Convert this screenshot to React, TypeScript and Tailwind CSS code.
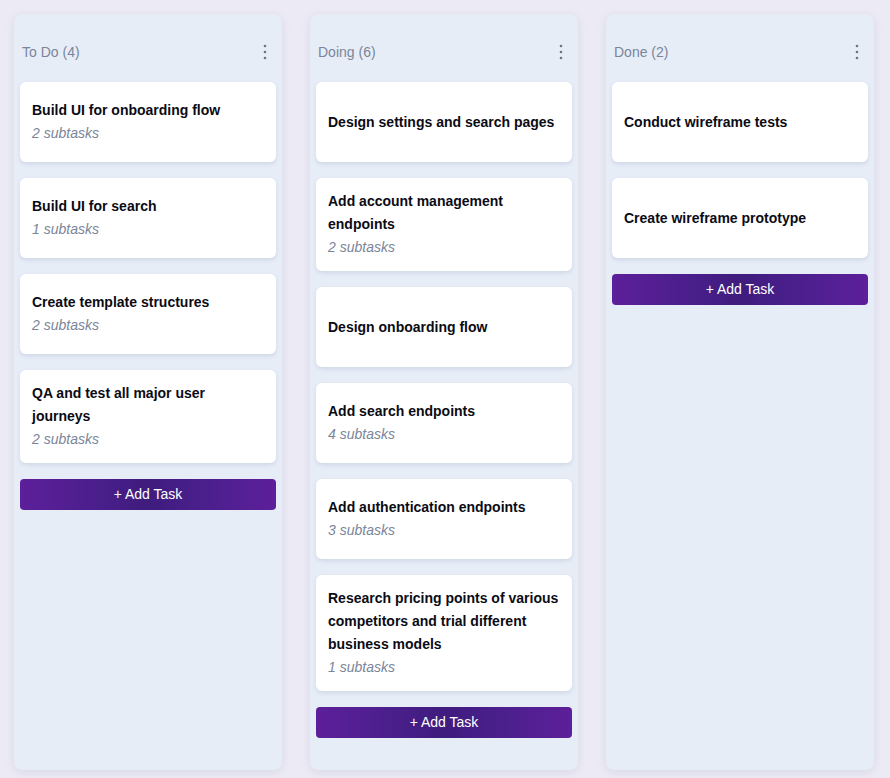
import React from "react";

type Task = { title: string; subtasks?: number };
type Col = { name: string; tasks: Task[] };

const cols: Col[] = [
  {
    name: "To Do",
    tasks: [
      { title: "Build UI for onboarding flow", subtasks: 2 },
      { title: "Build UI for search", subtasks: 1 },
      { title: "Create template structures", subtasks: 2 },
      { title: "QA and test all major user journeys", subtasks: 2 },
    ],
  },
  {
    name: "Doing",
    tasks: [
      { title: "Design settings and search pages" },
      { title: "Add account management endpoints", subtasks: 2 },
      { title: "Design onboarding flow" },
      { title: "Add search endpoints", subtasks: 4 },
      { title: "Add authentication endpoints", subtasks: 3 },
      {
        title: "Research pricing points of various competitors and trial different business models",
        subtasks: 1,
      },
    ],
  },
  {
    name: "Done",
    tasks: [
      { title: "Conduct wireframe tests" },
      { title: "Create wireframe prototype" },
    ],
  },
];

function Kebab() {
  return (
    <svg width="4" height="16" viewBox="0 0 4 16" className="text-[#6b7280]">
      <circle cx="2" cy="2" r="1.3" fill="currentColor" />
      <circle cx="2" cy="8" r="1.3" fill="currentColor" />
      <circle cx="2" cy="14" r="1.3" fill="currentColor" />
    </svg>
  );
}

export default function App() {
  return (
    <div
      className="w-[890px] h-[778px] bg-[#ecebf5] flex gap-[28px] pl-[14px] pt-[14px] pb-[8px]"
      style={{ fontFamily: '"Liberation Sans", Arial, sans-serif' }}
    >
      {cols.map((c) => (
        <div
          key={c.name}
          className="w-[268px] bg-[#e6edf7] rounded-[8px] shadow-[0_2px_10px_rgba(90,90,140,0.14)] px-[6px] pt-[26px] flex flex-col"
        >
          <div className="h-[24px] flex items-center justify-between pl-[2px] pr-[9px] mb-[18px]">
            <span className="text-[14px] text-[#7a8599]">
              {c.name} ({c.tasks.length})
            </span>
            <Kebab />
          </div>
          <div className="flex flex-col gap-[16px]">
            {c.tasks.map((t) => (
              <div
                key={t.title}
                className="bg-white rounded-[6px] shadow-[0_2px_4px_rgba(70,80,120,0.13)] min-h-[80px] px-[12px] py-[12px] flex flex-col justify-center"
              >
                <div className="text-[14px] font-bold text-[#0b0b14] leading-[23px]">
                  {t.title}
                </div>
                {t.subtasks !== undefined && (
                  <div className="text-[14px] italic text-[#7a8599] leading-[23px]">
                    {t.subtasks} subtasks
                  </div>
                )}
              </div>
            ))}
            <button className="h-[31px] rounded-[4px] text-white text-[14px] bg-[linear-gradient(90deg,#5d1f9a_0%,#4a1f8c_30%,#3f1c7d_50%,#4a1f8c_70%,#5d1f9a_100%)]">
              + Add Task
            </button>
          </div>
        </div>
      ))}
    </div>
  );
}
